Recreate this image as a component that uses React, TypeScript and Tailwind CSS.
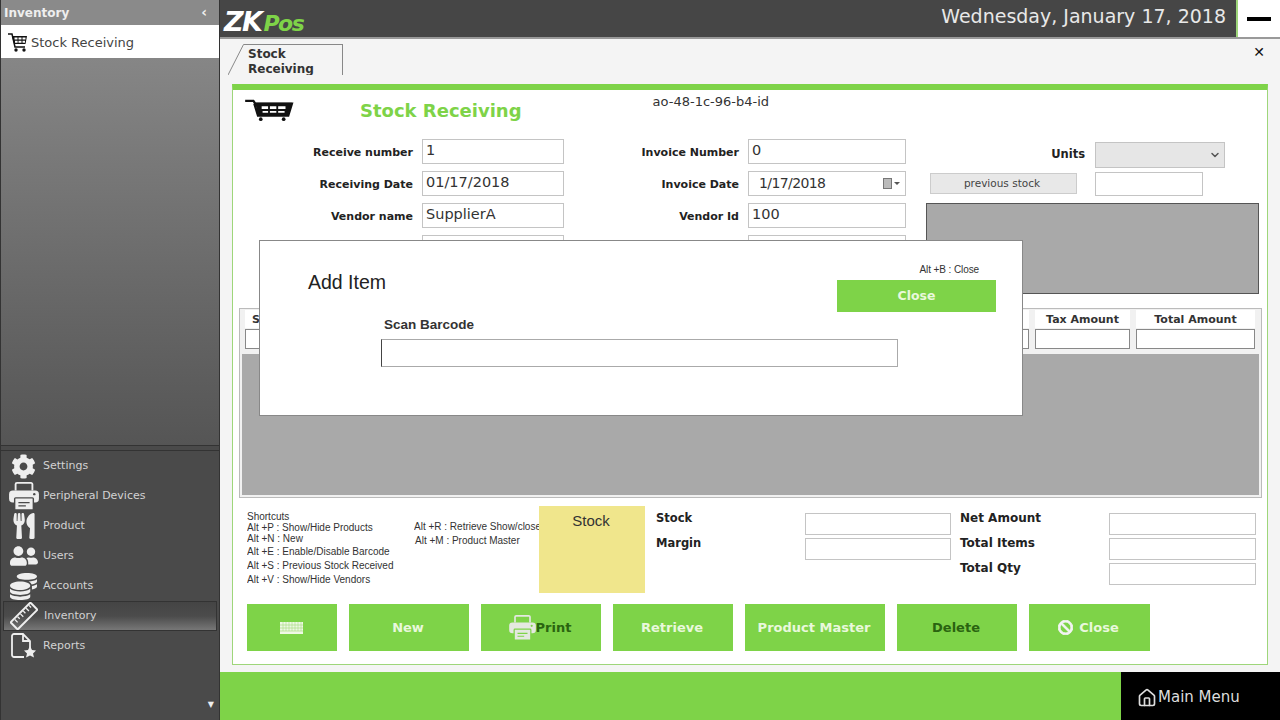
import { FaBan, FaCoins, FaCog, FaUserFriends, FaUtensils } from 'react-icons/fa'
import { Home, ChevronDown } from 'lucide-react'
import type { ReactNode } from 'react'

function CartIcon({ className }: { className?: string }) {
  return (
    <svg viewBox="0 0 52 24" className={className}>
      <path d="M0 2h9l2 3h40l-4 13H14L10 5" fill="none" stroke="#111" strokeWidth="2.5" />
      <path d="M11 4h40l-4 14H14z" fill="#111" />
      <path d="M18 8h7v3h-7zM27 8h7v3h-7zM36 8h8v3h-8zM19 13h6v2h-6zM27 13h7v2h-7zM36 13h7v2h-7z" fill="#fff" />
      <circle cx="17" cy="22" r="2" fill="#111" />
      <circle cx="42" cy="22" r="2" fill="#111" />
    </svg>
  )
}

function SmallCart() {
  return (
    <svg viewBox="0 0 20 20" className="h-[20px] w-[20px]">
      <path d="M0 2h4l3 13h10" fill="none" stroke="#111" strokeWidth="1.5" />
      <path d="M4 4h15l-1.5 8H6z" fill="#111" />
      <path d="M6.5 5.5h3v2h-3zM10.5 5.5h3v2h-3zM14.5 5.5h3v2h-3zM7 8.7h2.6v2h-2.6zM10.5 8.7h3v2h-3zM14.5 8.7h2.5v2h-2.5z" fill="#fff" />
      <circle cx="8" cy="18" r="1.7" fill="#111" />
      <circle cx="16" cy="18" r="1.7" fill="#111" />
    </svg>
  )
}

function PrinterIcon({ className, hole }: { className?: string; hole: string }) {
  return (
    <svg viewBox="0 0 32 30" className={className} fill="currentColor">
      <path d="M7 9V2.5A1.5 1.5 0 0 1 8.5 1h15A1.5 1.5 0 0 1 25 2.500V9" fill="none" stroke="currentColor" strokeWidth="2" />
      <rect x="0" y="9" width="32" height="13" rx="4" />
      <circle cx="27" cy="13" r="1.300" fill={hole} />
      <rect x="6" y="17" width="20" height="13" rx="1" stroke={hole} strokeWidth="1.500" />
      <path d="M10 22h12M10 25.500h8" stroke={hole} strokeWidth="1.300" />
    </svg>
  )
}

function RulerIcon() {
  return (
    <svg viewBox="0 0 28 28" className="h-[28px] w-[28px]">
      <g transform="rotate(-45 14 14)">
        <rect x="0" y="9" width="28" height="10" rx="1" fill="none" stroke="#eee" strokeWidth="2" />
        <path d="M5 10v4M9 10v3M13 10v4M17 10v3M21 10v4M25 10v3" stroke="#eee" strokeWidth="1.300" />
      </g>
    </svg>
  )
}

function KeyboardIcon() {
  return (
    <svg viewBox="0 0 23 12" className="h-[12px] w-[23px]">
      <rect width="23" height="12" fill="#eef8e4" />
      <path d="M0 3h23M0 6h23M0 9h23" stroke="#a9dd85" strokeWidth="0.700" />
      <path d="M3 0v9M6 0v9M9 0v9M12 0v9M15 0v9M18 0v9M21 0v9" stroke="#a9dd85" strokeWidth="0.600" />
    </svg>
  )
}

function ReportIcon() {
  return (
    <svg viewBox="0 0 28 26" className="h-[26px] w-[28px]">
      <path d="M2 3a2 2 0 0 1 2-2h9l7 7v8M13 1v7h7M14 24H4a2 2 0 0 1-2-2V3" fill="none" stroke="#eee" strokeWidth="1.800" />
      <path d="M20 13l2 4 4 .5-3 3 1 4-4-2-4 2 1-4-3-3 4-.5z" fill="#eee" />
    </svg>
  )
}

function Field({ label, value, className, boxWidth = 'w-[142px]' }: { label: string; value: string; className: string; boxWidth?: string }) {
  return (
    <div className="flex h-[25px] items-center">
      <span className={`pt-[3px] text-right text-[11px] font-bold text-[#222] ${className}`}>{label}</span>
      <TextBox value={value} className={`ml-[9px] ${boxWidth}`} />
    </div>
  )
}

function TextBox({ value, className }: { value: string; className?: string }) {
  return (
    <div className={`h-[25px] border border-[#c4c4c4] bg-white pl-[3px] text-[14.5px] leading-[21px] text-[#333] ${className}`}>
      {value}
    </div>
  )
}

const menu: { label: string; icon: ReactNode; active?: boolean }[] = [
  { label: 'Settings', icon: <FaCog size={25} /> },
  { label: 'Peripheral Devices', icon: <PrinterIcon hole="#4a4a4a" className="h-[28px] w-[30px]" /> },
  { label: 'Product', icon: <FaUtensils size={26} /> },
  { label: 'Users', icon: <FaUserFriends size={28} /> },
  { label: 'Accounts', icon: <FaCoins size={27} /> },
  { label: 'Inventory', icon: <RulerIcon />, active: true },
  { label: 'Reports', icon: <ReportIcon /> },
]

function Sidebar() {
  return (
    <aside className="flex h-[720px] w-[220px] shrink-0 flex-col border-x border-[#333] bg-[#4a4a4a]">
      <div className="flex h-[25px] items-center justify-between bg-[#8a8a8a] pl-[3px] pr-[12px] text-[12px] font-bold text-[#eee]">
        <span>Inventory</span>
        <span className="text-[14px]">‹</span>
      </div>
      <div className="flex h-[33px] items-center gap-[3px] bg-white pl-[7px] text-[13px] text-[#444]">
        <SmallCart />
        <span className="pt-[2px]">Stock Receiving</span>
      </div>
      <div className="h-[387px] bg-gradient-to-b from-[#868686] to-[#555]" />
      <div className="h-[6px] border-y border-[#333]" />
      <nav className="flex flex-col">
        {menu.map((item) => (
          <div
            key={item.label}
            className={`flex h-[30px] items-center text-[11px] text-[#d2d2d2] ${
              item.active ? 'mx-[2px] border border-[#333] bg-gradient-to-b from-[#444] via-[#4b4b4b] to-[#777]' : 'mx-[3px]'
            }`}
          >
            <span className={`flex shrink-0 justify-center text-[#eee] ${item.active ? 'w-[40px]' : 'w-[39px]'}`}>{item.icon}</span>
            <span>{item.label}</span>
          </div>
        ))}
      </nav>
      <div className="mt-auto flex justify-end pb-[9px] pr-[5px] text-[8px] text-[#eee]">▼</div>
    </aside>
  )
}

function ActionButton({ children, className, dark }: { children: ReactNode; className: string; dark?: boolean }) {
  return (
    <button className={`flex h-[47px] items-center justify-center bg-[#7ed348] pr-[2px] text-[13px] font-bold ${dark ? 'text-[#2a6410]' : 'text-[#e9f8dc]'} ${className}`}>
      {children}
    </button>
  )
}

function AddItemModal() {
  return (
    <div className="absolute left-[26px] top-[150px] h-[176px] w-[764px] border border-[#888] bg-white font-['Liberation_Sans',sans-serif]">
      <div className="flex h-[71px] justify-between pl-[48px] pr-[26px] pt-[21px]">
        <span className="text-[19.5px] leading-[41px] text-[#222]">Add Item</span>
        <div className="flex w-[159px] flex-col">
          <span className="mb-[4px] mt-[1px] h-[13px] pr-[17px] text-right text-[10px] leading-[13px] tracking-[-0.1px] text-[#333]">Alt +B : Close</span>
          <div className="flex h-[32px] items-center justify-center bg-[#7ed348] font-['DejaVu_Sans',sans-serif] text-[12.5px] font-bold text-[#e9f8dc]">Close</div>
        </div>
      </div>
      <div className="pl-[124px] pt-[5px] text-[13.5px] font-bold leading-[16px] text-[#333]">Scan Barcode</div>
      <div className="ml-[121px] mt-[6px] h-[28px] w-[517px] border border-[#aaa] border-l-[#444] bg-white" />
    </div>
  )
}

export default function App() {
  return (
    <div className="flex h-[720px] w-[1280px] overflow-hidden font-['DejaVu_Sans',sans-serif]">
      <Sidebar />
      <main className="flex min-w-0 flex-1 flex-col bg-[#f4f4f4]">
        <header className="flex h-[39px] shrink-0 items-center justify-between border-b-2 border-[#999] bg-[#464646]">
          <div className="flex items-baseline pl-[4px] pt-[6px] font-bold italic leading-none text-white">
            <span className="text-[27px] tracking-[-1.5px]">ZK</span>
            <span className="ml-[2px] text-[22px] tracking-[-1.5px] text-[#7ed348]">Pos</span>
          </div>
          <div className="flex h-full items-center">
            <span className="mr-[10px] pb-[5px] text-[19px] text-[#e8e8e8]">Wednesday, January 17, 2018</span>
            <div className="flex h-full w-[44px] items-center justify-center border-l-2 border-[#9ed67a] bg-white">
              <div className="h-[4px] w-[24px] bg-black" />
            </div>
          </div>
        </header>

        <div className="flex h-[45px] shrink-0 justify-between pl-[8px] pr-[15px] pt-[5px]">
          <div className="flex h-[31px]">
            <svg viewBox="0 0 16 31" className="h-[31px] w-[16px]">
              <path d="M0 31L15.500 0.500H16" fill="none" stroke="#888" />
            </svg>
            <div className="h-[31px] w-[99px] overflow-hidden border-r border-t border-[#888] pl-[4px] text-[12px] font-bold leading-[15px] text-[#333]">
              <div className="pt-[2px]">Stock<br />Receiving</div>
            </div>
          </div>
          <span className="text-[14px] font-bold leading-[16px] text-[#111]">✕</span>
        </div>

        <section className="relative ml-[12px] h-[581px] w-[1036px] border border-t-[6px] border-[#9ed67a] border-t-[#7ed348] bg-white">
          <div className="flex h-[49px]">
            <CartIcon className="ml-[10px] mt-[9px] h-[22px] w-[52px]" />
            <h1 className="ml-[65px] mt-[9px] h-[24px] text-[18px] font-bold leading-[24px] text-[#7ed348]">Stock Receiving</h1>
            <span className="ml-[131px] mt-[3px] text-[13px] leading-[17px] text-[#333]">ao-48-1c-96-b4-id</span>
          </div>

          <div className="flex">
            <div className="flex w-[331px] flex-col gap-[7px]">
              <Field className="w-[180px]" label="Receive number" value="1" />
              <Field className="w-[180px]" label="Receiving Date" value="01/17/2018" />
              <Field className="w-[180px]" label="Vendor name" value="SupplierA" />
              <Field className="w-[180px]" label="" value="" />
            </div>
            <div className="flex w-[362px] flex-col gap-[7px] pl-[6px]">
              <Field className="w-[169px]" boxWidth="w-[158px]" label="Invoice Number" value="0" />
              <div className="flex h-[25px] items-center">
                <span className="w-[169px] pt-[3px] text-right text-[11px] font-bold text-[#222]">Invoice Date</span>
                <div className="ml-[9px] flex h-[25px] w-[158px] items-center justify-between border border-[#c4c4c4] bg-white pl-[10px] pr-[5px] text-[14px] tracking-[-0.6px] text-[#333]">
                  <span>1/17/2018</span>
                  <span className="flex items-center gap-[2px]">
                    <span className="h-[11px] w-[9px] border border-[#777] bg-[#bbb]" />
                    <span className="h-0 w-0 border-x-[3px] border-t-[3px] border-x-transparent border-t-[#555]" />
                  </span>
                </div>
              </div>
              <Field className="w-[169px]" boxWidth="w-[158px]" label="Vendor Id" value="100" />
              <Field className="w-[169px]" boxWidth="w-[158px]" label="" value="" />
            </div>
            <div className="flex flex-1 flex-col">
              <div className="flex h-[28px] items-center pt-[3px]">
                <span className="w-[159px] text-right text-[11.5px] font-bold text-[#222]">Units</span>
                <div className="ml-[10px] flex h-[26px] w-[130px] items-center justify-end border border-[#c4c4c4] bg-[#e6e6e6] pr-[3px] text-[#555]">
                  <ChevronDown size={12} strokeWidth={3} />
                </div>
              </div>
              <div className="ml-[4px] mt-[4px] flex h-[25px] items-center">
                <div className="flex h-[21px] w-[147px] items-center justify-center border border-[#ccc] bg-[#e8e8e8] pr-[3px] text-[10.5px] text-[#444]">previous stock</div>
                <div className="ml-[18px] h-[24px] w-[108px] border border-[#c4c4c4] bg-white" />
              </div>
              <div className="mt-[7px] h-[91px] w-[333px] border border-[#555] bg-[#a9a9a9]" />
            </div>
          </div>

          <div className="ml-[6px] mt-[14px] h-[190px] w-[1023px] border border-[#bbb] bg-[#f1f1f1] px-[2px] pb-[2px] pt-[1px]">
            <div className="flex gap-[6px] pl-[3px] pr-[4px]">
              <div className="w-[784px]">
                <div className="h-[18px] bg-white pl-[7px] pt-[1px] text-[11px] font-bold leading-[18px] text-[#333]">S</div>
                <div className="mt-[1px] h-[20px] border border-[#888] bg-white" />
              </div>
              <div className="w-[95px]">
                <div className="h-[18px] bg-white pt-[1px] text-center text-[11px] font-bold leading-[18px] text-[#333]">Tax Amount</div>
                <div className="mt-[1px] h-[20px] border border-[#888] bg-white" />
              </div>
              <div className="w-[119px]">
                <div className="h-[18px] bg-white pt-[1px] text-center text-[11px] font-bold leading-[18px] text-[#333]">Total Amount</div>
                <div className="mt-[1px] h-[20px] border border-[#888] bg-white" />
              </div>
            </div>
            <div className="mt-[5px] h-[141px] bg-[#a9a9a9]" />
          </div>

          <div className="mt-[8px] flex h-[90px]">
            <div className="ml-[14px] w-[167px] overflow-hidden pt-[5px] font-['Liberation_Sans',sans-serif] text-[10px] leading-[14px] text-[#333]">
              <div className="leading-[11px]">Shortcuts</div>
              <div className="leading-[11px]">Alt +P : Show/Hide Products</div>
              <div className="leading-[11px]">Alt +N : New</div>
              <div className="mt-[1px]">Alt +E : Enable/Disable Barcode</div>
              <div>Alt +S : Previous Stock Received</div>
              <div>Alt +V : Show/Hide Vendors</div>
            </div>
            <div className="w-[125px] overflow-hidden whitespace-nowrap pt-[14px] font-['Liberation_Sans',sans-serif] text-[10px] leading-[14px] text-[#333]">
              <div>Alt +R : Retrieve Show/close</div>
              <div className="ml-[1px]">Alt +M : Product Master</div>
            </div>
            <div className="h-[87px] w-[106px] bg-[#f0e68c] pr-[2px] pt-[4px] text-center font-['Liberation_Sans',sans-serif] text-[15px] text-[#333]">Stock</div>
            <div className="flex w-[160px] flex-col gap-[8px] pl-[11px] pt-[4px] text-[11.5px] font-bold leading-[17px] text-[#222]">
              <span>Stock</span>
              <span>Margin</span>
            </div>
            <div className="flex w-[155px] flex-col gap-[3px] pt-[7px]">
              <div className="h-[22px] w-[146px] border border-[#c4c4c4] bg-white" />
              <div className="h-[22px] w-[146px] border border-[#c4c4c4] bg-white" />
            </div>
            <div className="flex w-[149px] flex-col gap-[8px] pt-[4px] text-[12px] font-bold leading-[17px] text-[#222]">
              <span>Net Amount</span>
              <span>Total Items</span>
              <span>Total Qty</span>
            </div>
            <div className="flex flex-col gap-[3px] pt-[7px]">
              <div className="h-[22px] w-[147px] border border-[#c4c4c4] bg-white" />
              <div className="h-[22px] w-[147px] border border-[#c4c4c4] bg-white" />
              <div className="h-[22px] w-[147px] border border-[#c4c4c4] bg-white" />
            </div>
          </div>

          <div className="ml-[14px] mt-[8px] flex gap-[12px]">
            <ActionButton className="w-[90px]"><KeyboardIcon /></ActionButton>
            <ActionButton className="w-[120px]">New</ActionButton>
            <ActionButton className="w-[120px]" dark>
              <PrinterIcon hole="#7ed348" className="h-[25px] w-[27px] text-[#e4e8e0]" />
              <span>Print</span>
            </ActionButton>
            <ActionButton className="w-[120px]">Retrieve</ActionButton>
            <ActionButton className="w-[140px]">Product Master</ActionButton>
            <ActionButton className="w-[120px]" dark>Delete</ActionButton>
            <ActionButton className="w-[121px] gap-[6px]"><FaBan size={15} stroke="currentColor" strokeWidth={30} className="text-[#f4f4f4]" />Close</ActionButton>
          </div>

          <AddItemModal />
        </section>

        <footer className="mt-auto flex h-[48px] shrink-0 justify-end bg-[#7ed348]">
          <div className="flex w-[159px] items-center gap-[1px] bg-black pl-[16px] pt-[3px] text-[15px] text-[#ddd]">
            <Home size={20} />
            <span>Main Menu</span>
          </div>
        </footer>
      </main>
    </div>
  )
}
